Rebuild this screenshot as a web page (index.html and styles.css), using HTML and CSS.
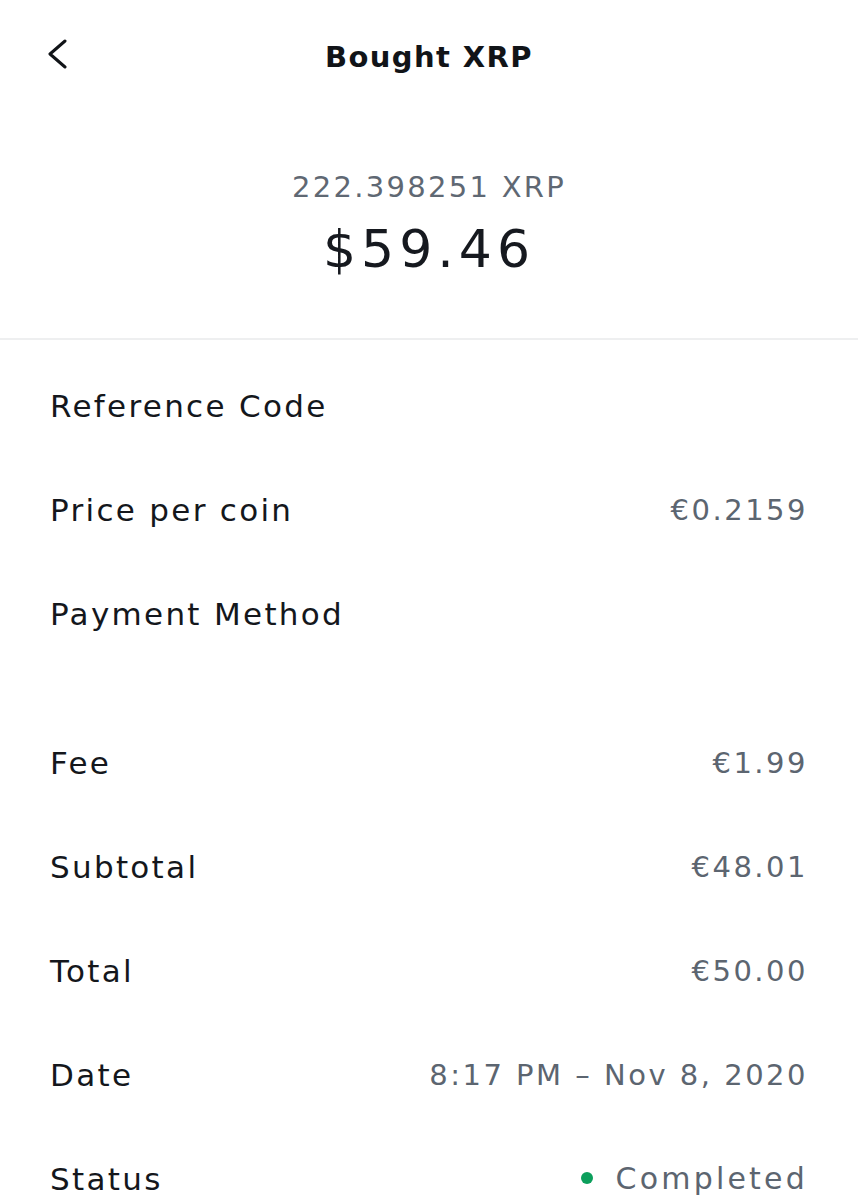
FILE: index.html
```html
<!DOCTYPE html>
<html lang="en">
<head>
<meta charset="utf-8">
<title>Bought XRP</title>
<link rel="stylesheet" href="styles.css">
</head>
<body>
<div class="screen">
  <header class="topbar">
    <div class="back">
      <svg width="22" height="30" viewBox="0 0 22 30" aria-hidden="true">
        <polyline points="19,2 4,15 19,28" fill="none" stroke="#111418" stroke-width="3" stroke-linecap="round" stroke-linejoin="round"/>
      </svg>
    </div>
    <h1 class="title">Bought XRP</h1>
    <div></div>
  </header>

  <section class="amounts">
    <div class="crypto">222.398251 XRP</div>
    <div class="fiat">$59.46</div>
  </section>

  <section class="details">
    <div class="row"><span class="label">Reference Code</span><span class="value"></span></div>
    <div class="row"><span class="label">Price per coin</span><span class="value">€0.2159</span></div>
    <div class="row row--tall"><span class="label">Payment Method</span><span class="value"></span></div>
    <div class="row"><span class="label">Fee</span><span class="value">€1.99</span></div>
    <div class="row"><span class="label">Subtotal</span><span class="value">€48.01</span></div>
    <div class="row"><span class="label">Total</span><span class="value">€50.00</span></div>
    <div class="row"><span class="label">Date</span><span class="value">8:17 PM – Nov 8, 2020</span></div>
    <div class="row"><span class="label">Status</span><span class="value status"><span class="dot"></span>Completed</span></div>
  </section>
</div>
</body>
</html>
```

FILE: styles.css
```css
* { box-sizing: border-box; }

html, body {
  margin: 0;
  padding: 0;
  background: #ffffff;
}

body {
  font-family: "DejaVu Sans", "Liberation Sans", sans-serif;
  color: #15181d;
}

.screen {
  width: 858px;
  height: 1200px;
  overflow: hidden;
}

.topbar {
  height: 114px;
  display: grid;
  grid-template-columns: 1fr auto 1fr;
  align-items: center;
}

.back {
  padding-left: 46px;
  display: flex;
  align-items: center;
  margin-top: -6px;
}

.title {
  margin: 0;
  font-size: 29px;
  font-weight: bold;
  letter-spacing: 1.4px;
  color: #111418;
}

.amounts {
  padding: 55px 0 59px;
  border-bottom: 2px solid #eeeff0;
  text-align: center;
}

.crypto {
  font-size: 29px;
  line-height: 36px;
  letter-spacing: 2.3px;
  color: #5f6873;
}

.fiat {
  margin-top: 14px;
  font-size: 52px;
  line-height: 60px;
  letter-spacing: 5px;
  color: #16191f;
}

.details {
  padding: 14px 52px 0 50px;
}

.row {
  display: flex;
  justify-content: space-between;
  align-items: flex-start;
  height: 104px;
  line-height: 104px;
  font-size: 31px;
  letter-spacing: 2.3px;
}

.row--tall {
  height: 149px;
}

.label {
  color: #14171c;
}

.value {
  font-size: 29px;
  letter-spacing: 2.5px;
  color: #5c6570;
  margin-right: -2px;
}

.status {
  display: flex;
  align-items: center;
  gap: 23px;
  font-size: 30px;
  letter-spacing: 3.2px;
}

.dot {
  width: 12px;
  height: 12px;
  border-radius: 50%;
  background: #0c9f5c;
  margin-top: -2px;
}
```
